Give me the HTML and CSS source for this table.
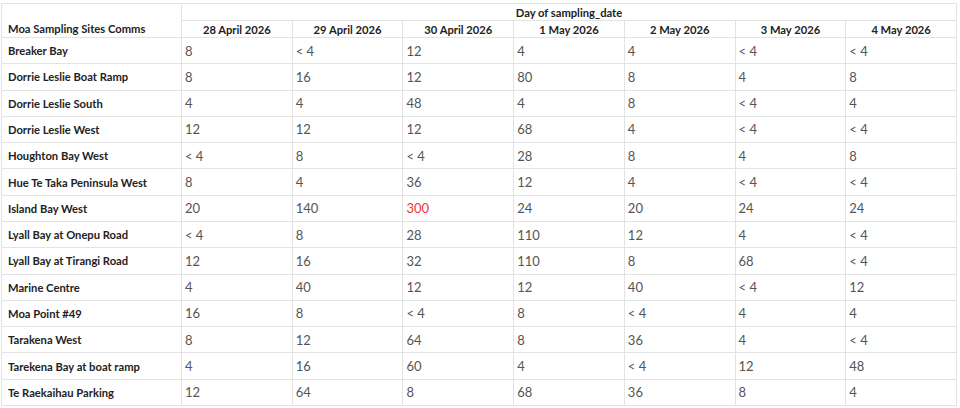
FILE: index.html
```html
<!DOCTYPE html>
<html>
<head>
<meta charset="utf-8">
<link rel="stylesheet" href="styles.css">
</head>
<body>
<div class="grid">
  <div class="cell corner">Moa Sampling Sites Comms</div>
  <div class="cell group">Day of sampling_date</div>
  <div class="cell colhead">28 April 2026</div>
  <div class="cell colhead">29 April 2026</div>
  <div class="cell colhead">30 April 2026</div>
  <div class="cell colhead">1 May 2026</div>
  <div class="cell colhead">2 May 2026</div>
  <div class="cell colhead">3 May 2026</div>
  <div class="cell colhead">4 May 2026</div>

  <div class="cell rowhead">Breaker Bay</div>
  <div class="cell val">8</div><div class="cell val">&lt; 4</div><div class="cell val">12</div><div class="cell val">4</div><div class="cell val">4</div><div class="cell val">&lt; 4</div><div class="cell val">&lt; 4</div>

  <div class="cell rowhead">Dorrie Leslie Boat Ramp</div>
  <div class="cell val">8</div><div class="cell val">16</div><div class="cell val">12</div><div class="cell val">80</div><div class="cell val">8</div><div class="cell val">4</div><div class="cell val">8</div>

  <div class="cell rowhead">Dorrie Leslie South</div>
  <div class="cell val">4</div><div class="cell val">4</div><div class="cell val">48</div><div class="cell val">4</div><div class="cell val">8</div><div class="cell val">&lt; 4</div><div class="cell val">4</div>

  <div class="cell rowhead">Dorrie Leslie West</div>
  <div class="cell val">12</div><div class="cell val">12</div><div class="cell val">12</div><div class="cell val">68</div><div class="cell val">4</div><div class="cell val">&lt; 4</div><div class="cell val">&lt; 4</div>

  <div class="cell rowhead">Houghton Bay West</div>
  <div class="cell val">&lt; 4</div><div class="cell val">8</div><div class="cell val">&lt; 4</div><div class="cell val">28</div><div class="cell val">8</div><div class="cell val">4</div><div class="cell val">8</div>

  <div class="cell rowhead">Hue Te Taka Peninsula West</div>
  <div class="cell val">8</div><div class="cell val">4</div><div class="cell val">36</div><div class="cell val">12</div><div class="cell val">4</div><div class="cell val">&lt; 4</div><div class="cell val">&lt; 4</div>

  <div class="cell rowhead">Island Bay West</div>
  <div class="cell val">20</div><div class="cell val">140</div><div class="cell val alert">300</div><div class="cell val">24</div><div class="cell val">20</div><div class="cell val">24</div><div class="cell val">24</div>

  <div class="cell rowhead">Lyall Bay at Onepu Road</div>
  <div class="cell val">&lt; 4</div><div class="cell val">8</div><div class="cell val">28</div><div class="cell val">110</div><div class="cell val">12</div><div class="cell val">4</div><div class="cell val">&lt; 4</div>

  <div class="cell rowhead">Lyall Bay at Tirangi Road</div>
  <div class="cell val">12</div><div class="cell val">16</div><div class="cell val">32</div><div class="cell val">110</div><div class="cell val">8</div><div class="cell val">68</div><div class="cell val">&lt; 4</div>

  <div class="cell rowhead">Marine Centre</div>
  <div class="cell val">4</div><div class="cell val">40</div><div class="cell val">12</div><div class="cell val">12</div><div class="cell val">40</div><div class="cell val">&lt; 4</div><div class="cell val">12</div>

  <div class="cell rowhead">Moa Point #49</div>
  <div class="cell val">16</div><div class="cell val">8</div><div class="cell val">&lt; 4</div><div class="cell val">8</div><div class="cell val">&lt; 4</div><div class="cell val">4</div><div class="cell val">4</div>

  <div class="cell rowhead">Tarakena West</div>
  <div class="cell val">8</div><div class="cell val">12</div><div class="cell val">64</div><div class="cell val">8</div><div class="cell val">36</div><div class="cell val">4</div><div class="cell val">&lt; 4</div>

  <div class="cell rowhead">Tarekena Bay at boat ramp</div>
  <div class="cell val">4</div><div class="cell val">16</div><div class="cell val">60</div><div class="cell val">4</div><div class="cell val">&lt; 4</div><div class="cell val">12</div><div class="cell val">48</div>

  <div class="cell rowhead">Te Raekaihau Parking</div>
  <div class="cell val">12</div><div class="cell val">64</div><div class="cell val">8</div><div class="cell val">68</div><div class="cell val">36</div><div class="cell val">8</div><div class="cell val">4</div>
</div>
</body>
</html>
```

FILE: styles.css
```css
html, body {
  margin: 0;
  padding: 0;
  background: #ffffff;
}

.grid {
  display: grid;
  grid-template-columns: 179px repeat(7, 1fr);
  grid-template-rows: 16px 16px repeat(14, 1fr);
  gap: 1px;
  padding: 1px;
  width: 956px;
  height: 403px;
  box-sizing: border-box;
  margin: 3px 0 0 1px;
  background: #e3e3e3;
}

.cell {
  background: #ffffff;
  display: flex;
  align-items: center;
  overflow: hidden;
  white-space: nowrap;
  font-family: "Lato", "Open Sans", sans-serif;
}

.corner {
  grid-row: 1 / 3;
  align-items: flex-end;
  padding: 0 0 1px 6px;
  font-weight: 700;
  font-size: 11.2px;
  color: #222222;
  line-height: 15px;
}

.group {
  grid-column: 2 / 9;
  justify-content: center;
  font-weight: 700;
  font-size: 11.2px;
  color: #222222;
}

.colhead {
  justify-content: center;
  font-weight: 700;
  font-size: 11.2px;
  color: #222222;
}

.rowhead {
  padding-left: 6px;
  font-weight: 700;
  font-size: 11.2px;
  color: #222222;
}

.val {
  padding-left: 3px;
  font-size: 13px;
  color: #555555;
}

.alert {
  color: #f2373b;
}
```
